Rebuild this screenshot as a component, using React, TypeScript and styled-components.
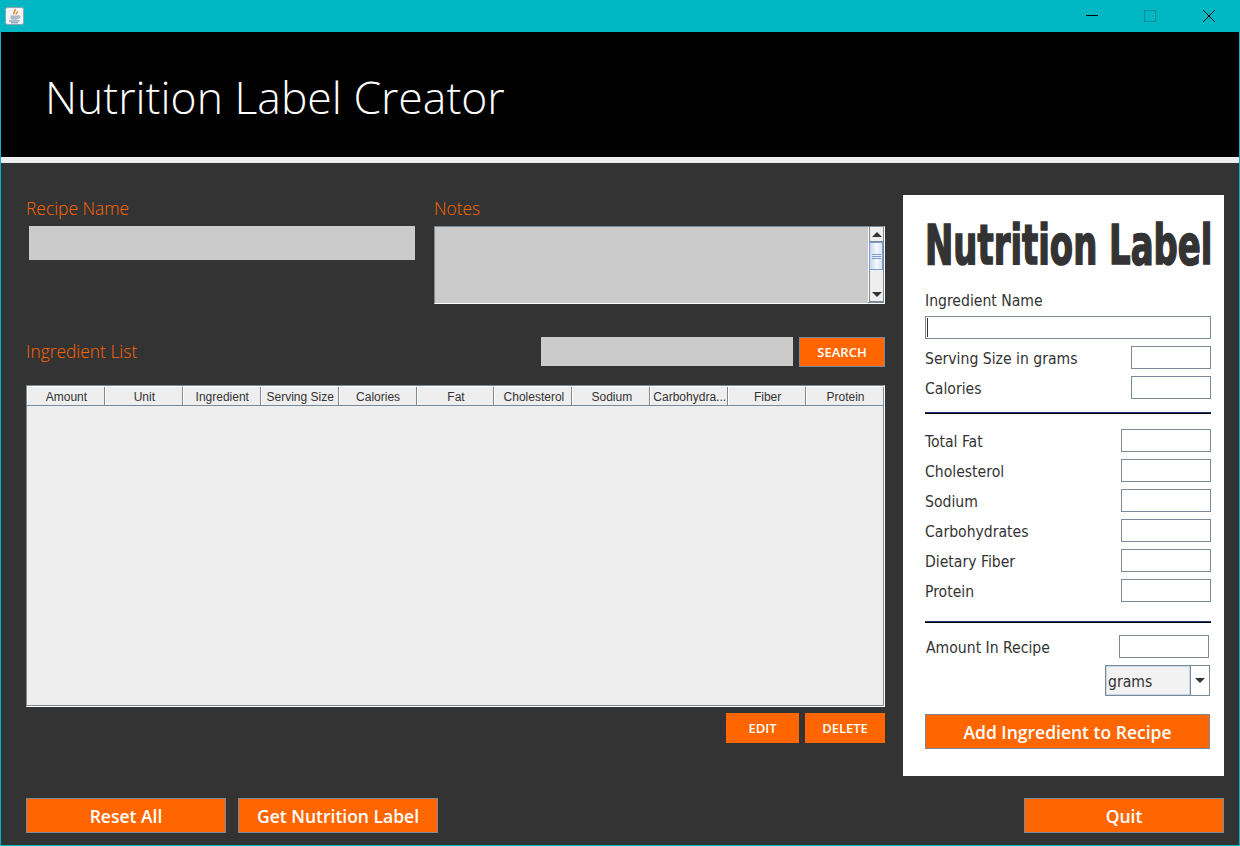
import React from 'react';
import styled, { createGlobalStyle } from 'styled-components';

const ORANGE = '#ff6600';
const DARK = '#333333';
const STEEL = '#7a8a99';
const FIELD_GRAY = '#cbcbcb';

const COLUMNS = [
  'Amount',
  'Unit',
  'Ingredient',
  'Serving Size',
  'Calories',
  'Fat',
  'Cholesterol',
  'Sodium',
  'Carbohydra...',
  'Fiber',
  'Protein',
];

const FACT_ROWS = ['Total Fat', 'Cholesterol', 'Sodium', 'Carbohydrates', 'Dietary Fiber', 'Protein'];

function JavaIcon() {
  return (
    <svg width="19" height="18" viewBox="0 0 19 18">
      <rect x="0.5" y="0.5" width="18" height="17" rx="2" fill="#f1f3f6" stroke="#97a3b2" />
      <path d="M10 2c1.6 1.8-2.6 3-1 5.4M12.2 4.4c.6 1.3-1.4 1.6-.8 3" fill="none" stroke="#ee8a2c" strokeWidth="1.6" />
      <path d="M5.5 8.5h7.5v2.5c0 1.3-1 1.8-2 1.8H7.5c-1 0-2-.5-2-1.8z" fill="#a9b8c7" />
      <path d="M13 9h1.5c.9 0 .9 2-1.5 2.3" fill="none" stroke="#7b93aa" />
      <path d="M4 14h10.5M6 15.8h7" stroke="#6f8ba6" strokeWidth="1" />
    </svg>
  );
}

function WindowIcon({ kind }: { kind: 'min' | 'max' | 'close' }) {
  return (
    <svg width="12" height="12" viewBox="0 0 12 12" shapeRendering="crispEdges">
      {kind === 'min' && <path d="M0 5.5h12" stroke="#000" />}
      {kind === 'max' && <rect x="0.5" y="0.5" width="11" height="11" fill="none" stroke="#0a8d9c" />}
      {kind === 'close' && <path d="M0 0L12 12M12 0L0 12" stroke="#000" shapeRendering="auto" />}
    </svg>
  );
}

export default function App() {
  return (
    <>
      <GlobalStyle />
      <Frame>
        <TitleBar>
          <AppIcon>
            <JavaIcon />
          </AppIcon>
          <WindowControls>
            <WindowButton>
              <WindowIcon kind="min" />
            </WindowButton>
            <WindowButton>
              <WindowIcon kind="max" />
            </WindowButton>
            <WindowButton>
              <WindowIcon kind="close" />
            </WindowButton>
          </WindowControls>
        </TitleBar>
        <Banner>
          <BannerTitle>Nutrition Label Creator</BannerTitle>
        </Banner>
        <Stripe />
        <Body>
          <Workspace>
            <RecipeColumn>
              <FieldsRow>
                <NameGroup>
                  <SectionLabel>Recipe Name</SectionLabel>
                  <NameInput />
                </NameGroup>
                <NotesGroup>
                  <SectionLabel>Notes</SectionLabel>
                  <NotesBox>
                    <NotesText />
                    <ScrollBar>
                      <ScrollArrow>
                        <ArrowUp />
                      </ScrollArrow>
                      <ScrollThumb>
                        <Grip />
                        <Grip />
                        <Grip />
                      </ScrollThumb>
                      <ScrollTrack />
                      <ScrollArrow>
                        <ArrowDown />
                      </ScrollArrow>
                    </ScrollBar>
                  </NotesBox>
                </NotesGroup>
              </FieldsRow>
              <ListBar>
                <ListLabel>Ingredient List</ListLabel>
                <SearchGroup>
                  <SearchInput />
                  <SmallButton $width={86} $bordered>
                    SEARCH
                  </SmallButton>
                </SearchGroup>
              </ListBar>
              <TableBox>
                <TableHeader>
                  {COLUMNS.map((name) => (
                    <HeaderCell key={name}>{name}</HeaderCell>
                  ))}
                </TableHeader>
              </TableBox>
              <TableActions>
                <SmallButton $width={73}>EDIT</SmallButton>
                <SmallButton $width={80}>DELETE</SmallButton>
              </TableActions>
            </RecipeColumn>
            <LabelPanel>
              <TitleClip>
                <PanelTitle>Nutrition Label</PanelTitle>
              </TitleClip>
              <FormLabel>Ingredient Name</FormLabel>
              <NameField $focused />
              <FormRow>
                <FormLabel>Serving Size in grams</FormLabel>
                <ValueField $width={80} />
              </FormRow>
              <FormRow>
                <FormLabel>Calories</FormLabel>
                <ValueField $width={80} />
              </FormRow>
              <Divider $top={13} />
              <FactList>
                {FACT_ROWS.map((name) => (
                  <FormRow key={name}>
                    <FormLabel>{name}</FormLabel>
                    <ValueField $width={90} />
                  </FormRow>
                ))}
              </FactList>
              <Divider $top={19} />
              <AmountRow>
                <FormLabel>Amount In Recipe</FormLabel>
                <ValueField $width={90} />
              </AmountRow>
              <UnitCombo>
                <UnitValue>grams</UnitValue>
                <UnitArrow>
                  <ArrowDown />
                </UnitArrow>
              </UnitCombo>
              <AddButton>Add Ingredient to Recipe</AddButton>
            </LabelPanel>
          </Workspace>
          <Footer>
            <FooterGroup>
              <LargeButton>Reset All</LargeButton>
              <LargeButton>Get Nutrition Label</LargeButton>
            </FooterGroup>
            <LargeButton>Quit</LargeButton>
          </Footer>
        </Body>
      </Frame>
    </>
  );
}

const GlobalStyle = createGlobalStyle`
  html, body {
    margin: 0;
    padding: 0;
    background: ${DARK};
  }
  * {
    box-sizing: border-box;
  }
`;

const Frame = styled.div`
  display: flex;
  flex-direction: column;
  width: 1240px;
  height: 846px;
  overflow: hidden;
  background: ${DARK};
  border: solid #00b7c3;
  border-width: 0 1px 1px 1px;
`;

const TitleBar = styled.div`
  display: flex;
  flex: none;
  align-items: center;
  justify-content: space-between;
  height: 32px;
  margin: 0 -1px;
  background: #00b7c3;
`;

const AppIcon = styled.div`
  display: flex;
  margin: 0 0 0 5px;
`;

const WindowControls = styled.div`
  display: flex;
  margin-right: 2px;
`;

const WindowButton = styled.div`
  display: flex;
  align-items: center;
  justify-content: center;
  width: 58.5px;
  height: 32px;
`;

const Banner = styled.div`
  display: flex;
  flex: none;
  align-items: center;
  height: 125px;
  padding: 3px 0 0 44px;
  background: #000;
`;

const BannerTitle = styled.h1`
  margin: 0;
  font-family: 'Open Sans', sans-serif;
  font-size: 44.5px;
  font-weight: 300;
  color: #fff;
`;

const Stripe = styled.div`
  flex: none;
  height: 6px;
  background: #eeeeee;
`;

const Body = styled.div`
  display: flex;
  flex: 1;
  flex-direction: column;
  padding: 32px 15px 0 25px;
`;

const Workspace = styled.div`
  display: flex;
  gap: 18px;
  height: 581px;
`;

const RecipeColumn = styled.div`
  width: 859px;
`;

const FieldsRow = styled.div`
  display: flex;
  height: 109px;
`;

const NameGroup = styled.div`
  width: 408px;
`;

const NotesGroup = styled.div`
  flex: 1;
`;

const SectionLabel = styled.div`
  height: 31px;
  font-family: 'Open Sans', sans-serif;
  font-size: 17.4px;
  font-weight: 300;
  line-height: 26px;
  color: ${ORANGE};
`;

const ListLabel = styled(SectionLabel)`
  height: 28px;
`;

const NameInput = styled.input`
  display: block;
  width: 386px;
  height: 34px;
  margin-left: 3px;
  border: none;
  background: ${FIELD_GRAY};
`;

const NotesBox = styled.div`
  display: flex;
  height: 78px;
  border: 1px solid ${STEEL};
  border-right-color: #fff;
  border-bottom-color: #fff;
  box-shadow: inset -1px -1px 0 ${STEEL};
`;

const NotesText = styled.div`
  flex: 1;
  background: ${FIELD_GRAY};
`;

const ScrollBar = styled.div`
  display: flex;
  flex: none;
  flex-direction: column;
  width: 15px;
  margin: 0 1px 1px 0;
  border-left: 1px solid #fff;
  background: #eeeeee;
`;

const ScrollArrow = styled.div`
  display: flex;
  flex: none;
  align-items: center;
  justify-content: center;
  height: 15px;
  background: #eeeeee;
  border: 1px solid ${STEEL};
  border-width: 0 0 1px 1px;
`;

const ArrowUp = styled.span`
  width: 0;
  height: 0;
  border-left: 5px solid transparent;
  border-right: 5px solid transparent;
  border-bottom: 5px solid ${DARK};
`;

const ArrowDown = styled.span`
  width: 0;
  height: 0;
  border-left: 5px solid transparent;
  border-right: 5px solid transparent;
  border-top: 5px solid ${DARK};
`;

const ScrollThumb = styled.div`
  display: flex;
  flex: none;
  flex-direction: column;
  gap: 1px;
  align-items: center;
  justify-content: center;
  height: 28px;
  border: 1px solid #7c9bd1;
  background: linear-gradient(90deg, #c9d8ee, #f5f8fd 55%, #dbe5f4);
`;

const Grip = styled.span`
  width: 9px;
  height: 1px;
  background: #7c9bd1;
`;

const ScrollTrack = styled.div`
  flex: 1;
  background: #eeeeee;
  border-left: 1px solid ${STEEL};
`;

const ListBar = styled.div`
  display: flex;
  align-items: center;
  justify-content: space-between;
  height: 30px;
  margin-top: 33px;
`;

const SearchGroup = styled.div`
  display: flex;
  gap: 6px;
`;

const SearchInput = styled.input`
  display: block;
  width: 252px;
  height: 29px;
  border: none;
  background: ${FIELD_GRAY};
`;

const SmallButton = styled.button<{ $width: number; $bordered?: boolean }>`
  width: ${(p) => p.$width}px;
  height: 30px;
  padding: 0;
  border: ${(p) => (p.$bordered ? `1px solid ${STEEL}` : 'none')};
  background: ${ORANGE};
  font-family: 'Open Sans', sans-serif;
  font-size: 13px;
  font-weight: 600;
  color: #fff;
`;

const TableBox = styled.div`
  height: 322px;
  margin-top: 18px;
  border: 1px solid ${STEEL};
  border-right-color: #fff;
  border-bottom-color: #fff;
  background: #eeeeee;
  box-shadow: inset -1px -1px 0 ${STEEL};
`;

const TableHeader = styled.div`
  display: grid;
  grid-template-columns: repeat(11, 1fr);
  height: 20px;
  border-top: 1px solid #fff;
`;

const HeaderCell = styled.div`
  overflow: hidden;
  padding: 2px 0 0 2px;
  border: solid ${STEEL};
  border-width: 0 1px 1px 0;
  box-shadow: inset 1px 0 0 #fff;
  background: #eeeeee;
  font-family: 'Liberation Sans', Arial, sans-serif;
  font-size: 12px;
  line-height: 16px;
  text-align: center;
  white-space: nowrap;
  color: ${DARK};
`;

const TableActions = styled.div`
  display: flex;
  gap: 6px;
  justify-content: flex-end;
  margin-top: 6px;
`;

const LabelPanel = styled.div`
  display: flex;
  flex-direction: column;
  width: 321px;
  padding: 0 13px 0 22px;
  background: #fff;
`;

const TitleClip = styled.div`
  flex: none;
  height: 94px;
  padding-top: 17px;
`;

const PanelTitle = styled.div`
  width: 287px;
  font-family: 'DejaVu Sans', sans-serif;
  font-size: 55px;
  font-stretch: condensed;
  font-weight: 700;
  line-height: 66px;
  white-space: nowrap;
  color: ${DARK};
  -webkit-text-stroke: 1.6px ${DARK};
  transform: scaleX(0.685);
  transform-origin: left center;
`;

const FormLabel = styled.div`
  height: 22px;
  font-family: 'DejaVu Sans', sans-serif;
  font-size: 15.6px;
  font-stretch: condensed;
  line-height: 25px;
  white-space: nowrap;
  color: ${DARK};
`;

const ValueField = styled.input<{ $width: number }>`
  display: block;
  width: ${(p) => p.$width}px;
  height: 23px;
  border: 1px solid ${STEEL};
  background: #fff;
`;

const NameField = styled.input<{ $focused?: boolean }>`
  display: block;
  flex: none;
  width: 286px;
  height: 23px;
  margin-top: 5px;
  border: 1px solid ${STEEL};
  background: ${(p) =>
    p.$focused ? `linear-gradient(${DARK}, ${DARK}) 1px center / 1px 19px no-repeat #fff` : '#fff'};
`;

const FormRow = styled.div`
  display: flex;
  align-items: center;
  justify-content: space-between;
  height: 23px;
  margin-top: 7px;
`;

const Divider = styled.div<{ $top: number }>`
  flex: none;
  height: 2px;
  margin-top: ${(p) => p.$top}px;
  background: linear-gradient(#1f3a78 50%, #000 50%);
`;

const FactList = styled.div`
  margin-top: 8px;
`;

const AmountRow = styled(FormRow)`
  margin-top: 12px;
  padding: 0 2px 0 1px;
`;

const UnitCombo = styled.div`
  display: flex;
  flex: none;
  align-self: flex-end;
  width: 105px;
  height: 31px;
  margin-top: 7px;
  margin-right: 1px;
  border: 1px solid ${STEEL};
`;

const UnitValue = styled.div`
  flex: 1;
  padding-left: 1px;
  border: 1px solid #c6d7ea;
  background: #f2f2f2;
  font-family: 'DejaVu Sans', sans-serif;
  font-size: 15.6px;
  font-stretch: condensed;
  line-height: 30px;
  color: ${DARK};
`;

const UnitArrow = styled.div`
  display: flex;
  flex: none;
  align-items: center;
  justify-content: center;
  width: 19px;
  border-left: 1px solid ${STEEL};
  background: #fff;
`;

const LargeButton = styled.button`
  width: 200px;
  height: 35px;
  padding: 1px 0 0;
  border: 1px solid ${STEEL};
  background: ${ORANGE};
  font-family: 'Open Sans', sans-serif;
  font-size: 17.5px;
  font-weight: 600;
  color: #fff;
`;

const AddButton = styled(LargeButton)`
  flex: none;
  width: 285px;
  margin-top: 18px;
`;

const Footer = styled.div`
  display: flex;
  justify-content: space-between;
  margin-top: 22px;
`;

const FooterGroup = styled.div`
  display: flex;
  gap: 12px;
`;
